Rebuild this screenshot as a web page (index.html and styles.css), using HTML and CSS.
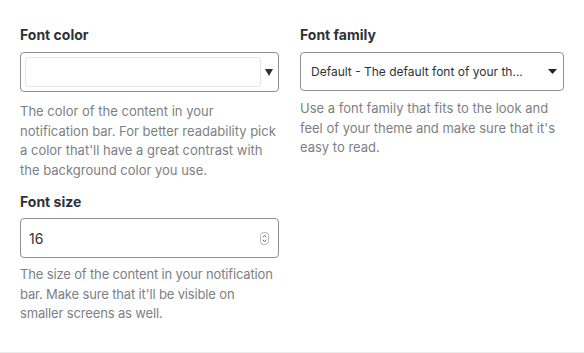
FILE: index.html
```html
<!DOCTYPE html>
<html>
<head>
  <title>Notification bar settings</title>
  <link rel="stylesheet" href="styles.css">
</head>
<body>
  <div class="settings">
    <div class="column">
      <div class="field">
        <h3 class="label">Font color</h3>
        <div class="control color-control">
          <span class="swatch"></span>
          <svg class="caret-small" width="8" height="7" viewBox="0 0 8 7"><path d="M0 0h8L4 7z" fill="#2c3338"/></svg>
        </div>
        <p class="desc desc-color">The color of the content in your notification bar. For better readability pick a color that'll have a great contrast with the background color you use.</p>
      </div>
      <div class="field">
        <h3 class="label">Font size</h3>
        <div class="control number-control">
          <span class="value">16</span>
          <svg class="spinner" width="9" height="13" viewBox="0 0 9 13">
            <rect x="0.5" y="0.5" width="8" height="12" rx="3" fill="#fff" stroke="#b5b5b5"/>
            <path d="M2.8 5.2L4.5 3.5L6.2 5.2M2.8 7.8L4.5 9.5L6.2 7.8" fill="none" stroke="#555" stroke-width="0.9"/>
          </svg>
        </div>
        <p class="desc desc-size">The size of the content in your notification bar. Make sure that it'll be visible on smaller screens as well.</p>
      </div>
    </div>
    <div class="column">
      <div class="field">
        <h3 class="label">Font family</h3>
        <div class="control select-control">
          <span class="value">Default - The default font of your th...</span>
          <svg class="caret" width="9" height="5" viewBox="0 0 9 5"><path d="M0 0h9L4.5 5z" fill="#1d2327"/></svg>
        </div>
        <p class="desc desc-family">Use a font family that fits to the look and feel of your theme and make sure that it's easy to read.</p>
      </div>
    </div>
  </div>
</body>
</html>
```

FILE: styles.css
```css
/* Notification bar: typography settings */
body {
  margin: 0;
  background-color: #fff;
  font-family: Inter, 'Liberation Sans', sans-serif;
}

.settings {
  display: grid;
  grid-template-columns: 259px 264px;
  column-gap: 21px;
  padding: 25px 20px 28px 20px;
  border-bottom: 1px solid #ebebeb;
}

.field + .field {
  margin-top: 12px;
}

.label {
  margin: 0 0 7px 0;
  font-size: 14px;
  line-height: 20px;
  font-weight: 700;
  color: #2c3338;
}

.control {
  box-sizing: border-box;
  height: 40px;
  border: 1px solid #8c8f94;
  border-radius: 4px;
  display: flex;
  align-items: center;
  background-color: #fff;
}

.color-control {
  padding: 0 5px 0 4px;
}

.swatch {
  box-sizing: border-box;
  width: 236px;
  height: 30px;
  border: 1px solid #e6e6e6;
  border-radius: 3px;
  background-color: #fff;
}

.caret-small {
  margin-left: auto;
}

.number-control {
  margin-top: -1px;
  padding: 0 9px 0 8px;
  font-size: 14px;
  color: #2c3338;
}

.spinner {
  margin-left: auto;
}

.select-control {
  height: 39px;
  padding: 0 6px 0 10px;
  font-size: 12px;
  color: #2c3338;
}

.caret {
  margin-left: auto;
}

.desc {
  margin: 10px 0 0 0;
  font-size: 13px;
  line-height: 19.5px;
  color: #7c7f84;
}

.desc-size {
  margin-top: 7px;
  letter-spacing: -0.15px;
}

.desc-family {
  margin-top: 8px;
}
```
